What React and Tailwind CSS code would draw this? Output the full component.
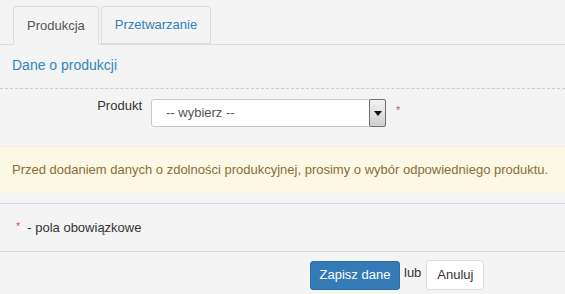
const Tab = ({ label, active }) => (
  <li
    className={
      active
        ? "-mb-px h-[39px] px-[13px] flex items-center border border-[#ddd] border-b-transparent bg-[#f4f4f4] text-[#555] rounded-t-[3px]"
        : "-mb-px h-[38px] px-[13px] flex items-center border border-[#ddd] text-[#3280b8] rounded-t-[3px]"
    }
  >
    {label}
  </li>
);

const App = () => {
  return (
    <div
      className="w-[565px] h-[294px] overflow-hidden bg-[#f4f4f4] text-[13px] text-[#333]"
      style={{ fontFamily: '"Liberation Sans", Arial, sans-serif' }}
    >
      <ul className="flex gap-[2px] pl-[13px] pt-[6px] border-b border-[#ddd]">
        <Tab label="Produkcja" active />
        <Tab label="Przetwarzanie" />
      </ul>

      <h3 className="px-[12px] pt-[11px] pb-[13px] text-[14px] text-[#2f86c1] leading-[19px]">
        Dane o produkcji
      </h3>
      <div className="border-t border-dashed border-[#ccc]" />

      <div className="flex items-start pt-[10px]">
        <label className="w-[142px] text-right leading-[16px] -mt-[1px] text-[#333]">Produkt</label>
        <div className="ml-[9px] w-[235px] h-[28px] flex border border-[#c8c8c8] rounded-[3px] bg-white">
          <span className="flex-1 flex items-center pl-[14px] text-[#555]">-- wybierz --</span>
          <span className="w-[17px] my-[-1px] mr-[-1px] flex items-center justify-center border border-[#707070] rounded-[2px] bg-gradient-to-b from-[#f2f2f2] to-[#d0d0d0]">
            <svg width="8" height="5" viewBox="0 0 8 5">
              <path d="M0 0h8L4 5z" fill="#111" />
            </svg>
          </span>
        </div>
        <span className="ml-[10px] mt-[3px] leading-[16px] text-[11px] text-[#d9534f]">*</span>
      </div>

      <div className="mt-[19px] h-[47px] flex items-center px-[12px] bg-[#fcf8e3] border-t border-[#faf2cc] text-[#8a6d3b]">
        Przed dodaniem danych o zdolności produkcyjnej, prosimy o wybór odpowiedniego produktu.
      </div>

      <div className="mt-[10px] border-t border-[#d8d8d8]" />
      <div className="h-[47px] flex items-center pl-[16px]">
        <span className="text-[11px] text-[#d9534f] mr-[7px] -mt-[3px]">*</span>
        <span>- pola obowiązkowe</span>
      </div>
      <div className="border-t border-[#d8d8d8]" />

      <div className="flex items-center pt-[8px] pl-[310px]">
        <button className="h-[29px] w-[90px] rounded-[3px] bg-[#337ab7] border border-[#2e6da4] text-white">
          Zapisz dane
        </button>
        <span className="ml-[4px] mr-[5px] -mt-[5px]">lub</span>
        <button className="h-[30px] w-[58px] rounded-[3px] bg-white border border-[#ddd] text-[#333]">
          Anuluj
        </button>
      </div>
    </div>
  );
};

export default App;
